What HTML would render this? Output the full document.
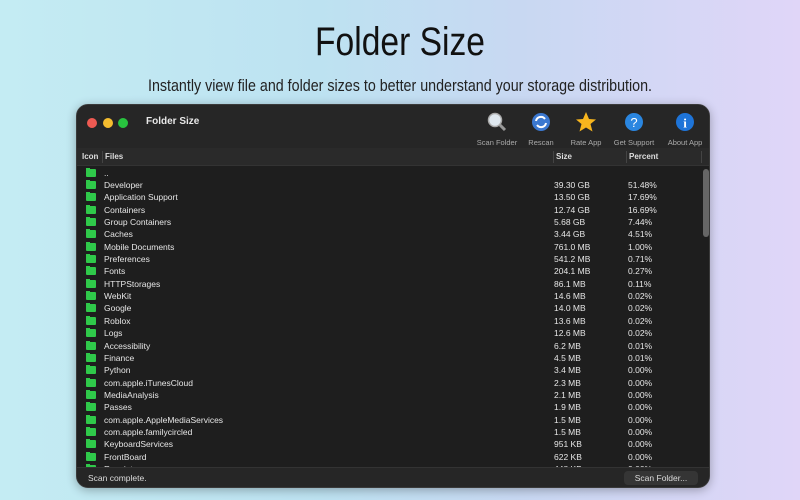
<!DOCTYPE html>
<html><head><style>
*{margin:0;padding:0;box-sizing:border-box}
body{width:800px;height:500px;overflow:hidden;position:relative;font-family:"Liberation Sans",sans-serif;
background:linear-gradient(90deg,#c4ecf3 0%,#bde2f1 40%,#c8d8f2 65%,#e0d6f8 100%)}
.t{position:absolute;left:0;width:800px;text-align:center;font-family:"Liberation Sans",sans-serif;color:#111;transform-origin:400px 0}
.win{position:absolute;left:76px;top:104px;width:634px;height:384px;background:#1e1e1e;border-radius:12px;overflow:hidden;box-shadow:0 2px 10px rgba(0,0,0,.3);border:1px solid #3a3a3a}
.tb{position:absolute;left:0;top:0;width:100%;height:43px;background:#262626}
.dot{position:absolute;top:13px;width:10px;height:10px;border-radius:50%}
.hd{position:absolute;top:43px;left:0;width:100%;height:18px;background:#2a2a2a;border-bottom:1px solid #333;font-size:8px;color:#ddd;font-weight:bold}
.hd span{position:absolute;top:4px}
.sep{position:absolute;top:3px;width:1px;height:12px;background:#444}
.row{position:absolute;left:0;width:100%;height:12px;font-size:8.5px;color:#e6e6e6;line-height:12px}
.row i{position:absolute;left:9px;top:2px;width:10px;height:8px;background:#2fc94a;border-radius:1px}
.row i:before{content:"";position:absolute;left:0;top:-1px;width:4px;height:2px;background:#2fc94a}
.row b{font-weight:normal;position:absolute}
.tl{position:absolute;top:33px;font-size:7.5px;color:#aaa;text-align:center;width:56px}
.st{position:absolute;left:0;bottom:0;width:100%;height:20px;background:#262626;border-top:1px solid #333;font-size:8.5px;color:#ddd}
</style></head><body>
<div class="t" style="top:20px;font-size:40px;transform:scaleX(0.84)">Folder Size</div>
<div class="t" style="top:76px;font-size:17px;color:#222;transform:scaleX(0.84)">Instantly view file and folder sizes to better understand your storage distribution.</div>
<div class="win">
<div class="tb">
<div class="dot" style="left:10px;background:#ee5a52"></div>
<div class="dot" style="left:26px;background:#f5bd2f"></div>
<div class="dot" style="left:41px;background:#28c33f"></div>
<div style="position:absolute;left:69px;top:11px;font-size:10px;font-weight:bold;color:#e8e8e8">Folder Size</div>
<svg style="position:absolute;left:409px;top:6px" width="22" height="22"><circle cx="9" cy="9" r="6.5" fill="#dfe8ef" stroke="#aaa" stroke-width="1.5"/><line x1="14" y1="14" x2="19" y2="19" stroke="#999" stroke-width="3"/></svg>
<svg style="position:absolute;left:454px;top:7px" width="20" height="20"><circle cx="10" cy="10" r="9" fill="#3b78d0"/><path d="M5 9a5 5 0 0 1 9-2M15 11a5 5 0 0 1-9 2" stroke="#fff" stroke-width="2" fill="none"/></svg>
<svg style="position:absolute;left:498px;top:6px" width="22" height="22"><polygon points="11,1 14,8 21,8.5 15.5,13 17.5,20.5 11,16.5 4.5,20.5 6.5,13 1,8.5 8,8" fill="#f7b51e"/></svg>
<svg style="position:absolute;left:547px;top:7px" width="20" height="20"><circle cx="10" cy="10" r="9" fill="#2a86e0"/><text x="10" y="15" font-size="13" fill="#fff" text-anchor="middle" font-family="Liberation Sans">?</text></svg>
<svg style="position:absolute;left:598px;top:7px" width="20" height="20"><circle cx="10" cy="10" r="9" fill="#1e74d8"/><text x="10" y="15.5" font-size="13" font-weight="bold" fill="#fff" text-anchor="middle" font-family="Liberation Serif">i</text></svg>
<div class="tl" style="left:392px">Scan Folder</div>
<div class="tl" style="left:436px">Rescan</div>
<div class="tl" style="left:481px">Rate App</div>
<div class="tl" style="left:529px">Get Support</div>
<div class="tl" style="left:580px">About App</div>
</div>
<div class="hd"><span style="left:5px">Icon</span><div class="sep" style="left:25px"></div><span style="left:28px">Files</span><div class="sep" style="left:476px"></div><span style="left:479px">Size</span><div class="sep" style="left:549px"></div><span style="left:552px">Percent</span><div class="sep" style="left:624px"></div></div>
<div id="rows"></div>
<div style="position:absolute;left:626px;top:64px;width:6px;height:68px;background:#666;border-radius:3px"></div>
<div class="st"><span style="position:absolute;left:11px;top:5px">Scan complete.</span>
<div style="position:absolute;left:547px;top:3px;width:74px;height:14px;background:#353535;border-radius:4px;text-align:center;line-height:14px">Scan Folder...</div></div>
</div>
<script>
var d=[["..","",""],["Developer","39.30 GB","51.48%"],["Application Support","13.50 GB","17.69%"],["Containers","12.74 GB","16.69%"],["Group Containers","5.68 GB","7.44%"],["Caches","3.44 GB","4.51%"],["Mobile Documents","761.0 MB","1.00%"],["Preferences","541.2 MB","0.71%"],["Fonts","204.1 MB","0.27%"],["HTTPStorages","86.1 MB","0.11%"],["WebKit","14.6 MB","0.02%"],["Google","14.0 MB","0.02%"],["Roblox","13.6 MB","0.02%"],["Logs","12.6 MB","0.02%"],["Accessibility","6.2 MB","0.01%"],["Finance","4.5 MB","0.01%"],["Python","3.4 MB","0.00%"],["com.apple.iTunesCloud","2.3 MB","0.00%"],["MediaAnalysis","2.1 MB","0.00%"],["Passes","1.9 MB","0.00%"],["com.apple.AppleMediaServices","1.5 MB","0.00%"],["com.apple.familycircled","1.5 MB","0.00%"],["KeyboardServices","951 KB","0.00%"],["FrontBoard","622 KB","0.00%"],["Receipts","448 KB","0.00%"]];
var h="";d.forEach(function(r,i){h+='<div class="row" style="top:'+(61.5+i*12.36)+'px"><i></i><b style="left:27px">'+r[0]+'</b><b style="left:477px">'+r[1]+'</b><b style="left:551px">'+r[2]+'</b></div>'});
var c=document.getElementById("rows");c.style.cssText="position:absolute;left:0;top:0;width:100%;height:363px;overflow:hidden";c.innerHTML=h;
</script>
</body></html>
